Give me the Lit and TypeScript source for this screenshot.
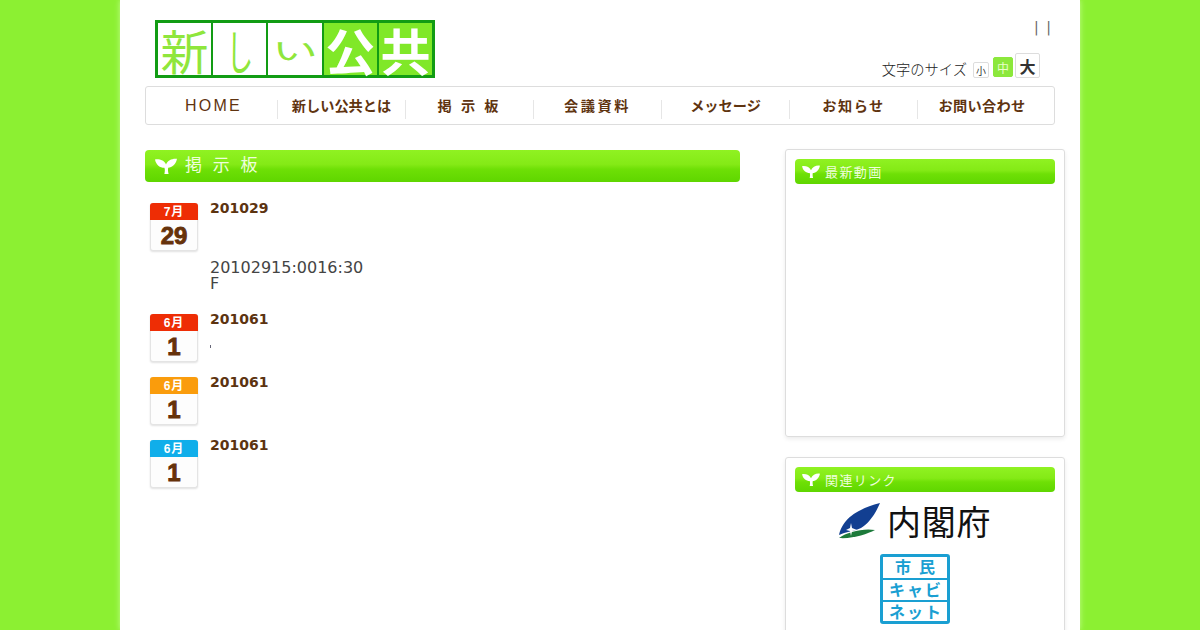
import { LitElement, html, css } from "lit";
import { customElement } from "lit/decorators.js";

const sprout = (w: number, h: number) => html`<svg class="sprout" width=${w} height=${h} viewBox="0 0 22 16" aria-hidden="true">
  <path fill="#fff" d="M9.4 16 C10 13 10 11.2 9.4 9.8 C5 9.8 1 6.8 0 1.4 C4.6 .8 9.6 2.4 11 6.6 C12.6 2.2 17.4 .2 22 .8 C21 6.4 17 9.6 13.2 9.8 C12.8 11.6 13 13.8 13.6 16 Z"/>
</svg>`;

const NAV = [
  { t: "HOME", ls: 2.2 },
  { t: "新しい公共とは", ls: 0 },
  { t: "掲 示 板", ls: 3 },
  { t: "会議資料", ls: 2.5 },
  { t: "メッセージ", ls: 0 },
  { t: "お知らせ", ls: 1.5 },
  { t: "お問い合わせ", ls: 0.3 },
];
const ENTRIES = [
  { m: "7月", d: "29", tone: "red", title: "201029", body: ["20102915:0016:30", "F"] },
  { m: "6月", d: "1", tone: "red", title: "201061", mark: true },
  { m: "6月", d: "1", tone: "orange", title: "201061" },
  { m: "6月", d: "1", tone: "blue", title: "201061" },
];

@customElement("app-root")
export class AppRoot extends LitElement {
  static styles = css`
    :host { display: block; height: 630px; overflow: hidden; background: #8cf032; font-family: "DejaVu Sans", sans-serif; }
    .page { width: 960px; height: 630px; margin: 0 auto; box-sizing: border-box; padding: 0 15px 0 25px; background: #fff; box-shadow: 0 0 6px rgba(200,255,150,.9); overflow: hidden; }
    .jp { font-family: "Noto Sans CJK JP", sans-serif; }

    .header { width: 910px; height: 86px; display: flex; justify-content: space-between; box-sizing: border-box; padding: 20px 0 0 10px; }
    .logo { display: flex; width: 280px; height: 58px; box-sizing: border-box; border: 3px solid #129c14; background: #129c14; gap: 2px; font-family: "Noto Sans CJK JP", sans-serif; }
    .logo span { flex: 1; display: flex; align-items: center; justify-content: center; font-size: 48px; line-height: 50px; background: #fff; color: #8fe63c; font-weight: 400; }
    .logo span.on { background: #80e828; color: #fff; font-weight: 700; font-size: 50px; }
    .logo i { font-style: normal; display: block; }
    .logo .narrow { transform: scaleX(.55); }
    .logo .short { font-size: 46px; transform: scaleY(.55); }
    .tools { width: 260px; height: 78px; flex: none; display: flex; flex-direction: column; align-items: flex-end; margin-top: -20px; }
    .bars { flex: none; height: 53px; padding: 19px 4px 0 0; box-sizing: border-box; font-size: 14px; line-height: 16px; color: #666; word-spacing: 3px; }
    .size { flex: none; display: flex; align-items: flex-end; margin-right: 15px; height: 25px; color: #333; }
    .size .lbl { font-size: 14.3px; line-height: 18px; margin-right: 6px; color: #222; font-weight: 300; }
    .size b { display: flex; align-items: center; justify-content: center; box-sizing: border-box; border: 1px solid #ddd; border-radius: 2px; font-family: "Noto Sans CJK JP", sans-serif; background: #fff; }
    .s { width: 16px; height: 16px; font-size: 10px; font-weight: 400; }
    .size .m { width: 20px; height: 20px; font-size: 12px; font-weight: 400; margin: 0 2px 1px 4px; background: #8ce83c; color: #e8ffc8; border-color: #8ce83c; }
    .l { width: 25px; height: 25px; font-size: 16px; }

    .nav { width: 910px; height: 39px; box-sizing: border-box; border: 1px solid #ddd; border-radius: 3px; display: flex; padding: 0 0 0 4px; background: #fff; }
    .nav a { width: 128px; box-sizing: border-box; height: 19px; margin-top: 13px; padding-bottom: 9px; display: flex; align-items: center; justify-content: center; font-family: "Noto Sans CJK JP", sans-serif; font-weight: 700; font-size: 14.2px; color: #5f3410; border-right: 1px solid #e6e6e6; white-space: pre; }
    .nav a:first-child { font-weight: 400; font-family: "Liberation Sans", sans-serif; font-size: 16px; padding-bottom: 7px; }
    .nav a:last-child { border-right: 0; }

    .cols { display: flex; gap: 45px; margin-top: 24px; }
    .main { width: 595px; padding-top: 1px; }
    .bar { display: flex; align-items: center; border-radius: 4px; color: #eefedc; background: linear-gradient(#90f222 0, #84ea16 45%, #6ee006 60%, #5fd600 100%); }
    .bar span { font-weight: 400; font-family: "Noto Sans CJK JP", sans-serif; }
    .main .bar { height: 32px; padding-left: 10px; gap: 8px; font-size: 17px; letter-spacing: 3.5px; }
    .main .bar span { position: relative; top: -1px; line-height: 26px; padding-bottom: 2px; }
    .side .bar { height: 25px; padding-left: 7px; gap: 5px; font-size: 13px; letter-spacing: 1.4px; }

    .entries { padding: 21px 0 0 5px; }
    .entry { display: flex; gap: 12px; padding-bottom: 15px; }
    .date { width: 48px; height: 48px; flex: none; box-sizing: border-box; border: 1px solid #e4e4e4; border-top: 0; border-radius: 3px; background: #fdfdfd; box-shadow: 0 1px 2px rgba(0,0,0,.12); text-align: center; }
    .date .mo { height: 17px; margin: 0 -1px; border-radius: 3px 3px 0 0; font: 700 12px/18px "Liberation Sans", "Noto Sans CJK JP", sans-serif; letter-spacing: 1px; color: #fff; }
    .red .mo { background: #ee2d05; }
    .orange .mo { background: #fa9c0c; }
    .blue .mo { background: #10aeea; }
    .date .day { font: 700 24px/32px "Liberation Sans", sans-serif; color: #66320a; -webkit-text-stroke: .9px #66320a; }
    .t { min-width: 0; margin-top: -3px; }
    .title { font-weight: 700; font-size: 14px; line-height: 16px; color: #5c3310; }
    .text { font-size: 16px; line-height: 16px; color: #444; margin: 44px 0 7px; }
    .mark { display: block; width: 1px; height: 3px; background: #667; margin-top: 18px; }

    .side { width: 280px; }
    .box { box-sizing: border-box; width: 280px; border: 1px solid #ddd; border-radius: 3px; padding: 9px; box-shadow: 0 2px 4px rgba(0,0,0,.08); margin-bottom: 20px; }
    .video { height: 288px; }
    .links { height: 300px; }
    .cao { display: flex; align-items: center; box-sizing: border-box; height: 62px; padding: 0 0 4px 44px; gap: 7px; color: #111; font-family: "Noto Sans CJK JP", sans-serif; font-size: 34px; line-height: 40px; letter-spacing: .7px; }
    .simin { margin-left: 85px; width: 70px; height: 70px; box-sizing: border-box; border: 3px solid #1a9fd2; border-radius: 3px; display: grid; grid-template-rows: 21px 22px 21px; font-family: "Noto Sans CJK JP", sans-serif; font-weight: 700; font-size: 16px; line-height: 18px; color: #1a9fd2; text-align: center; white-space: nowrap; }
    .simin span + span { border-top: 2px solid #1a9fd2; }
    .simin span { min-height: 0; box-sizing: border-box; }
    .simin .a { letter-spacing: 8px; padding-left: 8px; }
    .simin .b { letter-spacing: 2px; padding-left: 2px; }
  `;

  render() {
    return html`<div class="page">
      <div class="header">
        <div class="logo">
          <span>新</span><span><i class="narrow">し</i></span><span><i class="short">い</i></span><span class="on">公</span><span class="on">共</span>
        </div>
        <div class="tools">
          <div class="bars">| |</div>
          <div class="size">
            <span class="lbl jp">文字のサイズ</span>
            <b class="s">小</b><b class="m">中</b><b class="l">大</b>
          </div>
        </div>
      </div>
      <nav class="nav">${NAV.map((n) => html`<a style="letter-spacing:${n.ls}px">${n.t}</a>`)}</nav>
      <div class="cols">
        <main class="main">
          <div class="bar">${sprout(22, 16)}<span>掲 示 板</span></div>
          <div class="entries">
            ${ENTRIES.map((e) => html`<div class="entry">
              <div class="date ${e.tone}"><div class="mo">${e.m}</div><div class="day">${e.d}</div></div>
              <div class="t">
                <div class="title">${e.title}</div>
                ${e.body ? html`<div class="text">${e.body.map((l) => html`${l}<br />`)}</div>` : ""}
                ${e.mark ? html`<span class="mark"></span>` : ""}
              </div>
            </div>`)}
          </div>
        </main>
        <aside class="side">
          <section class="box video"><div class="bar">${sprout(18, 13)}<span>最新動画</span></div></section>
          <section class="box links">
            <div class="bar">${sprout(18, 13)}<span>関連リンク</span></div>
            <div class="cao">
              <svg width="41" height="36" viewBox="0 0 41 36" aria-hidden="true">
                <path fill="#123f91" d="M0 32 C3 20 11 8 41 0 C36 12 29 21 22 25 C16 28 6 29 0 32 Z"/>
                <path fill="#1c7a3a" d="M0 35 C8 29 24 25 36 27 C28 31 14 36 0 35 Z"/>
                <path fill="#fff" d="M12 20 L13 25 L18 27 L13 28 L12 33 L11 28 L7 27 L11 25 Z"/>
              </svg>
              <span>内閣府</span>
            </div>
            <div class="simin"><span class="a">市民</span><span class="b">キャビ</span><span class="b">ネット</span></div>
          </section>
        </aside>
      </div>
    </div>`;
  }
}
